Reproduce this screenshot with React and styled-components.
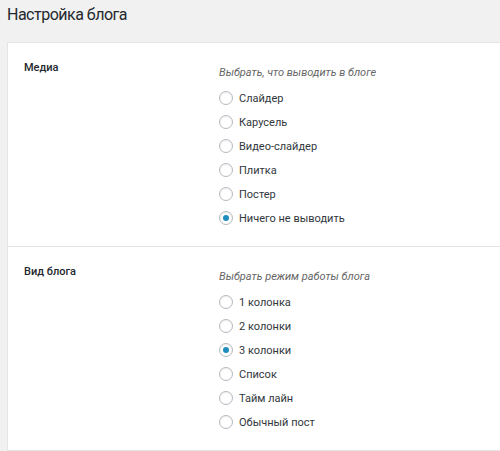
import { createGlobalStyle } from "styled-components";
import styled from "styled-components";

const GlobalStyle = createGlobalStyle`
  body {
    margin: 0;
    background-color: #f1f1f1;
    font-family: Roboto, "Liberation Sans", sans-serif;
    overflow: hidden;
  }
`;

const mediaOptions = ["Слайдер", "Карусель", "Видео-слайдер", "Плитка", "Постер", "Ничего не выводить"];
const viewOptions = ["1 колонка", "2 колонки", "3 колонки", "Список", "Тайм лайн", "Обычный пост"];

function Radio({ label, checked }) {
  return (
    <RadioRow>
      <RadioCircle $checked={checked} />
      <span>{label}</span>
    </RadioRow>
  );
}

export default function App() {
  return (
    <Page>
      <GlobalStyle />
      <Title>Настройка блога</Title>
      <Panel>
        <Section>
          <Label>Медиа</Label>
          <Field>
            <Description>Выбрать, что выводить в блоге</Description>
            <RadioList>
              {mediaOptions.map((o, i) => (
                <Radio key={o} label={o} checked={i === 5} />
              ))}
            </RadioList>
          </Field>
        </Section>
        <Section>
          <Label>Вид блога</Label>
          <Field>
            <Description>Выбрать режим работы блога</Description>
            <RadioList>
              {viewOptions.map((o, i) => (
                <Radio key={o} label={o} checked={i === 2} />
              ))}
            </RadioList>
          </Field>
        </Section>
      </Panel>
    </Page>
  );
}

const Page = styled.div`
  width: 500px;
  height: 451px;
  overflow: hidden;
`;

const Title = styled.h1`
  margin: 0;
  padding: 3px 0 0 7px;
  height: 42px;
  box-sizing: border-box;
  font-size: 16px;
  font-weight: 400;
  line-height: 24px;
  letter-spacing: -0.5px;
  color: #23282d;
`;

const Panel = styled.div`
  margin-left: 7px;
  background-color: #ffffff;
  border-left: 1px solid #e5e5e5;
  border-top: 1px solid #e5e5e5;
`;

const Section = styled.div`
  display: grid;
  grid-template-columns: 195px 1fr;
  padding: 15px 0 16px 16px;
  border-bottom: 1px solid #e5e5e5;
`;

const Label = styled.div`
  font-size: 11px;
  font-weight: 500;
  line-height: 20px;
  color: #23282d;
`;

const Field = styled.div`
  padding-top: 5px;
`;

const Description = styled.div`
  font-size: 11px;
  font-style: italic;
  line-height: 20px;
  color: #666666;
  margin-bottom: 3px;
`;

const RadioList = styled.div`
  display: flex;
  flex-direction: column;
`;

const RadioRow = styled.label`
  display: flex;
  align-items: center;
  height: 24px;
  font-size: 11px;
  color: #32373c;
`;

const RadioCircle = styled.span`
  position: relative;
  width: 14px;
  height: 14px;
  box-sizing: border-box;
  border: 1px solid #b4b9be;
  border-radius: 50%;
  background: #fff;
  box-shadow: inset 0 1px 2px rgba(0, 0, 0, 0.07);
  margin-right: 6px;
  flex-shrink: 0;

  &::after {
    content: "";
    display: ${(p) => (p.$checked ? "block" : "none")};
    position: absolute;
    left: 3px;
    top: 3px;
    width: 6px;
    height: 6px;
    border-radius: 50%;
    background: #1e8cbe;
  }
`;
